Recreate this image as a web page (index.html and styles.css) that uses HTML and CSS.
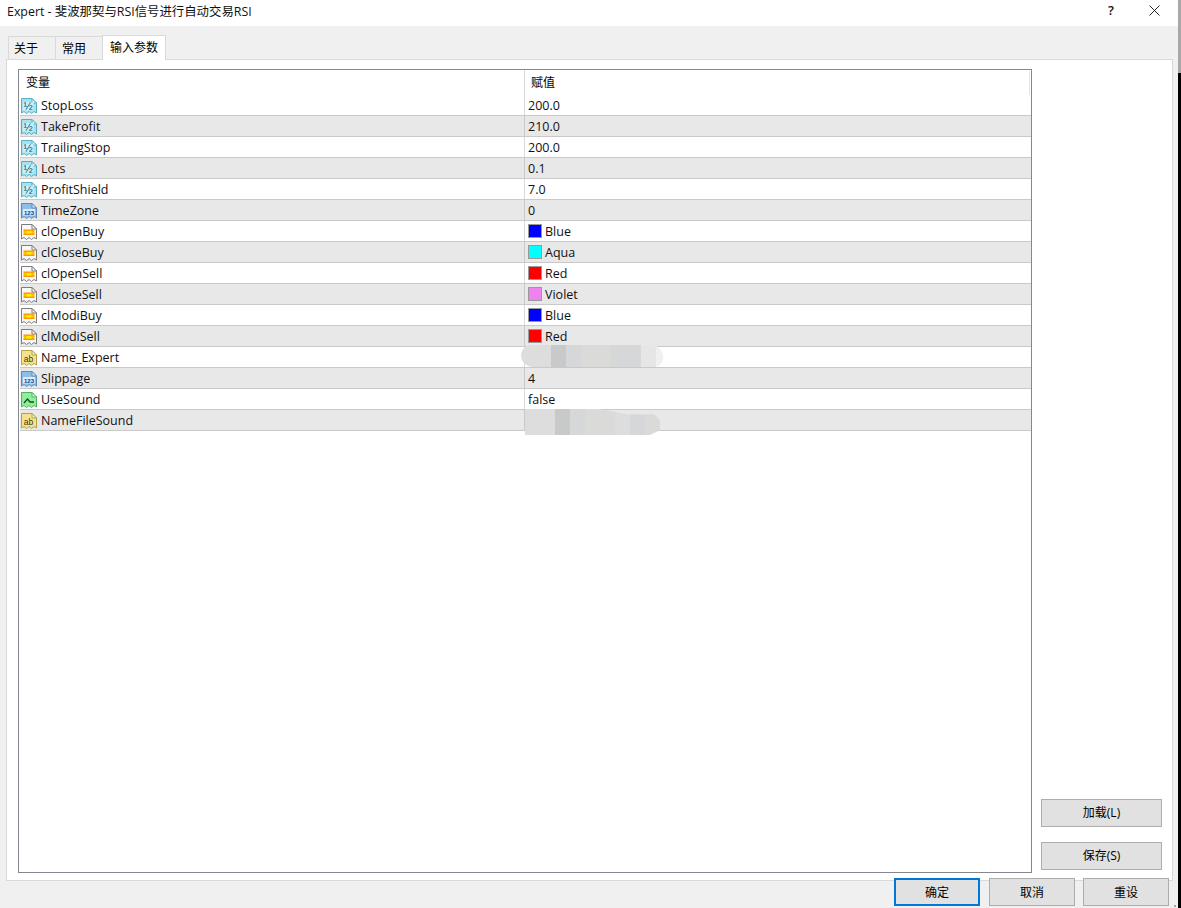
FILE: index.html
```html
<!DOCTYPE html>
<html lang="zh">
<head>
<meta charset="utf-8">
<title>Expert</title>
<link rel="stylesheet" href="styles.css">
</head>
<body>
<svg class="defs" width="0" height="0" aria-hidden="true">
  <defs>
    <linearGradient id="flame" x1="0" y1="0" x2="0" y2="1">
      <stop offset="0" stop-color="#ff8a00"/>
      <stop offset=".5" stop-color="#ffc800"/>
      <stop offset="1" stop-color="#ff8a00"/>
    </linearGradient>
    <symbol id="doc-frac" viewBox="0 0 16 16">
      <path d="M.5 .5H11L15.500 5V15L13 13.500L10.500 15.500L8 13.500L5.500 15.500L3 13.500L.5 15Z" fill="#a4e2f0" stroke="#5aaec4"/>
      <path d="M11 .5V5H15.500Z" fill="#e6f8fc" stroke="#5aaec4"/>
      <rect x="2" y="4" width="10.500" height="8.500" fill="#cdf0f7"/>
      <text x="7.200" y="11.500" class="ico-text frac-text">½</text>
    </symbol>
    <symbol id="doc-int" viewBox="0 0 16 16">
      <path d="M.5 .5H11L15.500 5V15L13 13.500L10.500 15.500L8 13.500L5.500 15.500L3 13.500L.5 15Z" fill="#8fbde9" stroke="#5a8cc0"/>
      <path d="M11 .5V5H15.500Z" fill="#d8e9f8" stroke="#5a8cc0"/>
      <rect x="2" y="6" width="12" height="6.500" fill="#dcebf9"/>
      <text x="8" y="11.700" class="ico-text int-text">123</text>
    </symbol>
    <symbol id="doc-color" viewBox="0 0 16 16">
      <path d="M.5 .5H11L15.500 5V15L13 13.500L10.500 15.500L8 13.500L5.500 15.500L3 13.500L.5 15Z" fill="#f8f8f8" stroke="#7c7c7c"/>
      <path d="M11 .5V5H15.500Z" fill="#fff" stroke="#7c7c7c"/>
      <rect x="2.500" y="5.500" width="11" height="5.500" fill="url(#flame)"/>
      <rect x="5.500" y="7" width="5" height="2.500" fill="#ffee00"/>
    </symbol>
    <symbol id="doc-str" viewBox="0 0 16 16">
      <path d="M.5 .5H11L15.500 5V15L13 13.500L10.500 15.500L8 13.500L5.500 15.500L3 13.500L.5 15Z" fill="#f3e38f" stroke="#b3a348"/>
      <path d="M11 .5V5H15.500Z" fill="#fbf5cf" stroke="#b3a348"/>
      <text x="7.500" y="11.800" class="ico-text str-text">ab</text>
    </symbol>
    <symbol id="doc-bool" viewBox="0 0 16 16">
      <path d="M.5 .5H11L15.500 5V15L13 13.500L10.500 15.500L8 13.500L5.500 15.500L3 13.500L.5 15Z" fill="#8fee9b" stroke="#55b062"/>
      <path d="M11 .5V5H15.500Z" fill="#dcf9df" stroke="#55b062"/>
      <path d="M3 11L6.500 7L9 10H13" fill="none" stroke="#12501c" stroke-width="1.300"/>
    </symbol>
  </defs>
</svg>

<div class="window">
  <header class="titlebar">
    <span class="title">Expert - 斐波那契与RSI信号进行自动交易RSI</span>
    <span class="help">?</span>
    <svg class="close" width="11" height="11" viewBox="0 0 11 11" aria-hidden="true"><path d="M.5 .5L10.500 10.500M10.500 .5L.5 10.500" stroke="#222" fill="none"/></svg>
  </header>

  <div class="content">
    <nav class="tabs">
      <span class="tab">关于</span>
      <span class="tab tab-mid">常用</span>
      <span class="tab tab-active">输入参数</span>
    </nav>

    <section class="panel">
      <div class="grid">
        <div class="head">
          <span class="col-name">变量</span>
          <span class="col-value">赋值</span>
        </div>

        <div class="row"><span class="name"><svg class="ico"><use href="#doc-frac"/></svg>StopLoss</span><span class="value">200.0</span></div>
        <div class="row alt"><span class="name"><svg class="ico"><use href="#doc-frac"/></svg>TakeProfit</span><span class="value">210.0</span></div>
        <div class="row"><span class="name"><svg class="ico"><use href="#doc-frac"/></svg>TrailingStop</span><span class="value">200.0</span></div>
        <div class="row alt"><span class="name"><svg class="ico"><use href="#doc-frac"/></svg>Lots</span><span class="value">0.1</span></div>
        <div class="row"><span class="name"><svg class="ico"><use href="#doc-frac"/></svg>ProfitShield</span><span class="value">7.0</span></div>
        <div class="row alt"><span class="name"><svg class="ico"><use href="#doc-int"/></svg>TimeZone</span><span class="value">0</span></div>
        <div class="row"><span class="name"><svg class="ico"><use href="#doc-color"/></svg>clOpenBuy</span><span class="value"><i class="swatch c-blue"></i>Blue</span></div>
        <div class="row alt"><span class="name"><svg class="ico"><use href="#doc-color"/></svg>clCloseBuy</span><span class="value"><i class="swatch c-aqua"></i>Aqua</span></div>
        <div class="row"><span class="name"><svg class="ico"><use href="#doc-color"/></svg>clOpenSell</span><span class="value"><i class="swatch c-red"></i>Red</span></div>
        <div class="row alt"><span class="name"><svg class="ico"><use href="#doc-color"/></svg>clCloseSell</span><span class="value"><i class="swatch c-violet"></i>Violet</span></div>
        <div class="row"><span class="name"><svg class="ico"><use href="#doc-color"/></svg>clModiBuy</span><span class="value"><i class="swatch c-blue"></i>Blue</span></div>
        <div class="row alt"><span class="name"><svg class="ico"><use href="#doc-color"/></svg>clModiSell</span><span class="value"><i class="swatch c-red"></i>Red</span></div>
        <div class="row"><span class="name"><svg class="ico"><use href="#doc-str"/></svg>Name_Expert</span><span class="value">
          <span class="smear smear-a"><i class="b1"></i><i class="b1"></i><i class="b3"></i><i class="b2"></i><i class="b6"></i><i class="b6"></i><i class="b2"></i><i class="b2"></i><i class="b4"></i><i class="b5"></i></span>
        </span></div>
        <div class="row alt"><span class="name"><svg class="ico"><use href="#doc-int"/></svg>Slippage</span><span class="value">4</span></div>
        <div class="row"><span class="name"><svg class="ico"><use href="#doc-bool"/></svg>UseSound</span><span class="value">false</span></div>
        <div class="row alt"><span class="name"><svg class="ico"><use href="#doc-str"/></svg>NameFileSound</span><span class="value">
          <span class="smear smear-b"><i class="b1"></i><i class="b1"></i><i class="b3"></i><i class="b2"></i><i class="b6"></i><i class="b6"></i><i class="b1"></i><i class="b2"></i><i class="b6"></i></span>
        </span></div>
      </div>

      <aside class="side">
        <button class="btn side-btn">加载(L)</button>
        <button class="btn side-btn">保存(S)</button>
      </aside>
    </section>

    <footer class="footer">
      <button class="btn foot-btn primary">确定</button>
      <button class="btn foot-btn">取消</button>
      <button class="btn foot-btn">重设</button>
    </footer>
  </div>
  <i class="grip"></i>
</div>
</body>
</html>
```
FILE: styles.css
```css
* { box-sizing: border-box; }
html, body { margin: 0; height: 908px; overflow: hidden; }
body {
  background: linear-gradient(#a8a8a8 0 73px, #000 73px);
  font-family: "Open Sans", "Noto Sans CJK SC", sans-serif;
  font-size: 12px;
  color: #000;
}
.defs { position: absolute; }
.ico-text { font-family: "Liberation Sans", sans-serif; text-anchor: middle; font-weight: 700; }
.frac-text { font-size: 11px; font-weight: 400; fill: #0f4f6c; }
.int-text { font-size: 6px; fill: #12407a; }
.str-text { font-size: 8.500px; font-weight: 400; fill: #3f380c; }
.window {
  width: 1178px;
  height: 908px;
  display: flex;
  flex-direction: column;
  background: #f0f0f0;
  position: relative;
}
.grip { position: absolute; right: 2px; bottom: 1px; width: 2px; height: 2px; background: #a5a5a5; }
.titlebar {
  height: 26px;
  flex: none;
  background: #fff;
  display: flex;
  align-items: center;
  padding-left: 7px;
  font-size: 12.400px;
  color: #111;
}
.title { flex: 1; position: relative; top: -2px; }
.help { width: 12px; font-size: 13px; font-weight: 600; position: relative; top: -3px; margin-right: 29px; }
.close { margin-right: 18px; position: relative; top: -3px; }
.content { flex: 1; display: flex; flex-direction: column; padding: 10px 5px 0 6px; min-height: 0; }
.tabs { display: flex; height: 23px; flex: none; align-items: flex-end; padding-left: 2px; position: relative; z-index: 1; }
.tab {
  height: 23px;
  width: 48px;
  background: #f0f0f0;
  border: 1px solid #d9d9d9;
  border-bottom: none;
  display: flex;
  align-items: center;
  padding-left: 5px;
  padding-bottom: 1px;
}
.tab-mid { width: 48px; margin-left: -1px; padding-left: 6px; }
.tab-active {
  width: 64px;
  height: 25px;
  margin-left: -1px;
  background: #fff;
  padding-left: 7px;
  padding-bottom: 2px;
  margin-bottom: -1px;
}
.panel {
  height: 822px;
  flex: none;
  background: #fff;
  border: 1px solid #d9d9d9;
  display: flex;
  padding: 9px 10px 7px 11px;
}
.grid {
  width: 1014px;
  flex: none;
  border: 1px solid #828790;
  background: #fff;
  padding: 0 0 0 1px;
  position: relative;
}
.head { height: 25px; display: flex; align-items: center; font-size: 12px; }
.col-name { width: 505px; padding-left: 6px; border-right: 1px solid #d9d9d9; height: 25px; line-height: 26px; }
.col-value { padding-left: 6px; line-height: 26px; height: 25px; }
.head::after { content: ""; position: absolute; right: 1px; top: 1px; height: 24px; border-right: 1px solid #e5e5e5; }
.row {
  height: 21px;
  display: flex;
  align-items: center;
  border-bottom: 1px solid #c9c9c9;
  font-family: "Open Sans", sans-serif;
  font-size: 12.500px;
  color: #111;
  width: 1011px;
}
.row.alt { background: #e8e8e8; }
.name {
  width: 505px;
  height: 20px;
  display: flex;
  align-items: center;
  border-right: 1px solid #d9d9d9;
}
.row.alt .name { border-right-color: #c9c9c9; }
.ico { width: 16px; height: 16px; margin: 2px 4px 0 1px; flex: none; }
.value { display: flex; align-items: center; padding-left: 3px; flex: 1; height: 20px; position: relative; }
.swatch { width: 14px; height: 14px; margin-right: 3px; border: 1px solid #9a9a9a; flex: none; }
.c-blue { background: #0000ff; }
.c-aqua { background: #00ffff; }
.c-red { background: #ff0000; }
.c-violet { background: #ee82ee; }
.smear {
  position: absolute;
  display: flex;
  overflow: hidden;
}
.smear i { display: block; width: 15px; flex: none; }
.smear .b1 { background: #dddddd; }
.smear .b2 { background: #d6d7d8; }
.smear .b3 { background: #c8cac9; }
.smear .b4 { background: #e6e6e6; }
.smear .b5 { background: #f0f0f0; }
.smear .b6 { background: #dadad8; }
.smear-a { left: -4px; top: -2px; height: 22px; width: 142px; border-radius: 11px 13px 9px 13px; }
.smear-b { left: 0; top: -1px; height: 26px; width: 136px; clip-path: polygon(0 0, 55% 0, 75% 20%, 95% 20%, 100% 45%, 100% 80%, 92% 100%, 0 100%); }
.side {
  flex: 1;
  display: flex;
  flex-direction: column;
  justify-content: flex-end;
  align-items: flex-end;
  gap: 15px;
  padding-bottom: 3px;
}
.btn {
  font-family: "Open Sans", "Noto Sans CJK SC", sans-serif;
  font-size: 12px;
  color: #000;
  background: #e1e1e1;
  border: 1px solid #adadad;
  padding: 0;
  height: 28px;
}
.side-btn { width: 121px; padding-bottom: 2px; }
.footer {
  height: 27px;
  flex: none;
  display: flex;
  justify-content: flex-end;
  gap: 8px;
  padding-right: 4px;
  margin-top: -3px;
  position: relative;
}
.foot-btn { width: 86px; }
.primary { border: 2px solid #0078d7; margin-right: 1px; }
```
